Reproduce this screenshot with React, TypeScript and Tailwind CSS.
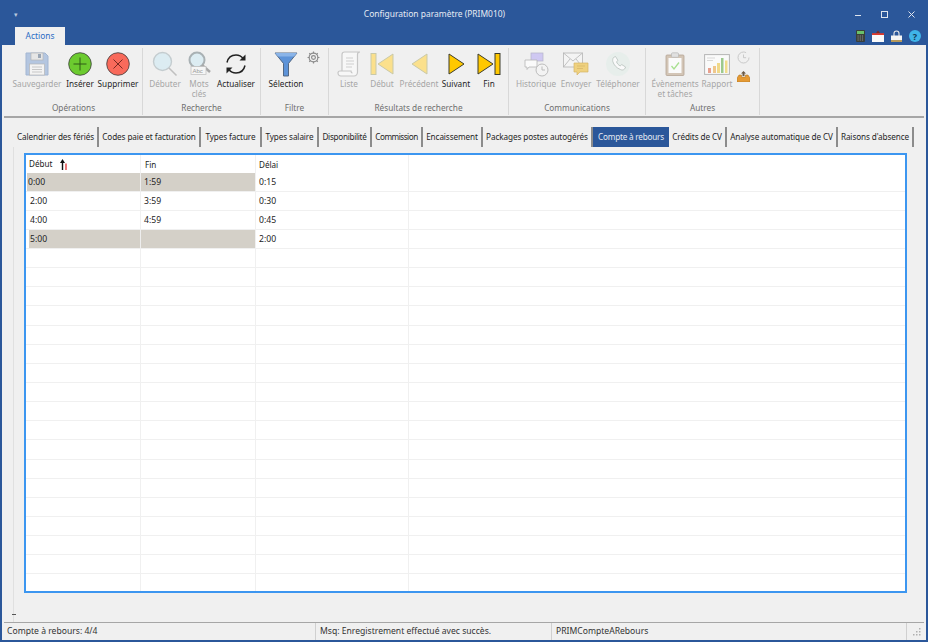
import React from 'react';

const FONT = 'font-["Noto_Sans","Open_Sans","Liberation_Sans",sans-serif]';

function Save() {
  return (
    <svg width="24" height="24" viewBox="0 0 24 24">
      <path d="M1 1h19l3 3v19H1z" fill="#b4c6e0" stroke="#a3b6d2" />
      <rect x="6" y="1" width="12" height="7" fill="#e6e6e6" stroke="#b5b5b5" strokeWidth="0.7" />
      <rect x="13" y="2" width="3" height="4" fill="#9aa6b5" />
      <rect x="4.5" y="12" width="15" height="11" fill="#f3f3f3" stroke="#b5b5b5" strokeWidth="0.7" />
      <path d="M7 15h10M7 17.5h10M7 20h10" stroke="#bbb" strokeWidth="0.8" />
    </svg>
  );
}

function Insert() {
  return (
    <svg width="24" height="24" viewBox="0 0 24 24">
      <circle cx="12" cy="12" r="11.3" fill="#6ccb2f" stroke="#3c3c3c" strokeWidth="0.8" />
      <path d="M12 5.5v13M5.5 12h13" stroke="#2f5a17" strokeWidth="1" />
    </svg>
  );
}

function Remove() {
  return (
    <svg width="24" height="24" viewBox="0 0 24 24">
      <circle cx="12" cy="12" r="11.3" fill="#f96a5b" stroke="#3c3c3c" strokeWidth="0.8" />
      <path d="M7.5 7.5l9 9M16.5 7.5l-9 9" stroke="#7a2a22" strokeWidth="1" />
    </svg>
  );
}

function Magnifier() {
  return (
    <svg width="26" height="26" viewBox="0 0 26 26">
      <circle cx="10.5" cy="10.5" r="9" fill="#dcecf2" stroke="#c4cccf" strokeWidth="1.4" />
      <path d="M17 17l7.5 7.5" stroke="#c0c0c0" strokeWidth="1.6" />
    </svg>
  );
}

function Keywords() {
  return (
    <svg width="24" height="26" viewBox="0 0 24 26">
      <circle cx="10" cy="9" r="7.5" fill="#dcecf2" stroke="#a9b1b4" strokeWidth="2" />
      <path d="M15 14l8 7" stroke="#a8a8a8" strokeWidth="2.4" />
      <rect x="4" y="15.5" width="15" height="8" fill="#f5f5f5" stroke="#bdbdbd" strokeWidth="0.7" />
      <text x="5.5" y="22" fontSize="6" fill="#9a9a9a" fontFamily="Liberation Sans">Abc</text>
    </svg>
  );
}

function Refresh() {
  return (
    <svg width="24" height="22" viewBox="0 0 24 22" fill="none">
      <path d="M3 9.5C4 5 7.5 2 12 2c3 0 5.500 1.300 7 3.500" stroke="#222" strokeWidth="1.500" />
      <path d="M21.500 1.500v6h-6z" fill="#222" />
      <path d="M21 12.500C20 17 16.500 20 12 20c-3 0-5.500-1.300-7-3.500" stroke="#222" strokeWidth="1.500" />
      <path d="M2.500 20.500v-6h6z" fill="#222" />
    </svg>
  );
}

function Funnel() {
  return (
    <svg width="24" height="25" viewBox="0 0 24 25">
      <path d="M1 1h22l-8.500 10.500V24h-5V11.500z" fill="#5d93d8" stroke="#4a5d78" strokeWidth="0.9" />
      <path d="M1 1h22l-3 3.500H4z" fill="#8ab4e8" />
    </svg>
  );
}

function Gear() {
  return (
    <svg width="13" height="13" viewBox="0 0 24 24" fill="none" stroke="#8b8b8b" strokeWidth="2.200">
      <circle cx="12" cy="12" r="3.500" />
      <circle cx="12" cy="12" r="8" />
      <path d="M12 1v3M12 20v3M1 12h3M20 12h3M4.200 4.200l2.200 2.200M17.600 17.600l2.200 2.200M19.800 4.200l-2.200 2.200M6.400 17.600l-2.200 2.200" />
    </svg>
  );
}

function Scroll() {
  return (
    <svg width="24" height="26" viewBox="0 0 24 26" fill="none" stroke="#c6c6c6" strokeWidth="1.200">
      <path d="M5 20V3.500C5 2 6 1 7.500 1H23c-1.500 0-2.500 1-2.500 2.500V21c0 2-1.500 4-3.500 4H4c-2 0-3-1.500-3-3 0-1 1-2 2-2h11c0 1 .5 2 1.500 2" fill="#f7f7f7" />
      <path d="M9 7h7M9 10h8M9 13h8M9 16h6" stroke="#d0d0d0" />
    </svg>
  );
}

// first / previous / next / last all share the same triangle, only the colours change
function Arrow({ dir, bar, faded }: { dir: 'left' | 'right'; bar?: boolean; faded?: boolean }) {
  const fill = faded ? '#fbe08c' : '#ffc800';
  const stroke = faded ? '#c9c9a8' : '#3c3c2c';
  const w = bar ? 24 : 17;
  const points = dir === 'right' ? '1,1 16,11 1,21' : bar ? '23,1 8,11 23,21' : '16,1 1,11 16,21';
  return (
    <svg width={w} height="22" viewBox={`0 0 ${w} 22`}>
      <polygon points={points} fill={fill} stroke={stroke} strokeWidth="1" />
      {bar && (
        <rect x={dir === 'right' ? 18 : 1} y="0.500" width="5" height="21" fill={fill} stroke={stroke} strokeWidth="1" />
      )}
    </svg>
  );
}

function History() {
  return (
    <svg width="25" height="25" viewBox="0 0 25 25">
      <rect x="7" y="1" width="12" height="8" fill="#cfc8f2" stroke="#b4b4c8" strokeWidth="0.7" />
      <path d="M1 8h12v7H5l-2 2.500V15H1z" fill="#fafafa" stroke="#b5b5b5" strokeWidth="0.8" />
      <circle cx="18" cy="18" r="6" fill="#f3f3f3" stroke="#b5b5b5" strokeWidth="0.9" />
      <path d="M18 14.500V18h3" stroke="#b5b5b5" fill="none" strokeWidth="0.9" />
    </svg>
  );
}

function Mail() {
  return (
    <svg width="26" height="24" viewBox="0 0 26 24">
      <rect x="0.500" y="1" width="19" height="14" fill="#f4f4f4" stroke="#b5b5b5" strokeWidth="0.8" />
      <path d="M0.500 1L10 9l9.500-8M0.500 15L7 7M19.500 15L13 7" stroke="#b5b5b5" strokeWidth="0.8" fill="none" />
      <path d="M11 11h14v9h-8l-3 3v-3h-3z" fill="#efd17f" stroke="#d6b568" strokeWidth="0.7" />
      <path d="M14 14h8M14 16.500h6" stroke="#d6b568" strokeWidth="0.7" />
    </svg>
  );
}

function Phone() {
  return (
    <svg width="24" height="24" viewBox="0 0 24 24">
      <circle cx="12" cy="12" r="12" fill="#e7eeeb" />
      <path d="M7.500 5.500l2-1 2.500 4-1.500 1.200c.5 1.800 2 3.500 3.800 4.300l1.300-1.500 4 2.500-1 2c-1 1-2.500 1.300-4 .6C10.500 16 7.800 13 6.800 9.500c-.3-1.500 0-3 .7-4z" fill="#fafafa" stroke="#b8c2bd" strokeWidth="0.8" />
    </svg>
  );
}

function Clipboard() {
  return (
    <svg width="20" height="24" viewBox="0 0 20 24">
      <rect x="1" y="3" width="18" height="20.500" rx="1" fill="#d3c5b6" stroke="#b5a596" strokeWidth="0.8" />
      <rect x="3.500" y="6" width="13" height="15" fill="#fafafa" />
      <rect x="6.500" y="0.800" width="7" height="4.500" rx="1" fill="#e0e0e0" stroke="#b8b8b8" strokeWidth="0.7" />
      <path d="M6.500 14l2.500 3 5-6.500" fill="none" stroke="#a8e090" strokeWidth="1.300" />
    </svg>
  );
}

function Report() {
  return (
    <svg width="26" height="21" viewBox="0 0 26 21">
      <rect x="0.600" y="0.600" width="24.800" height="19.800" fill="#fafafa" stroke="#b5b5b5" strokeWidth="1" />
      <path d="M3 4h8M3 6.500h6" stroke="#cfcfcf" strokeWidth="0.8" />
      <rect x="4" y="14" width="3" height="5" fill="#e8a08e" />
      <rect x="9" y="12" width="3" height="7" fill="#efc78b" />
      <rect x="13" y="9" width="3" height="10" fill="#f0d98a" />
      <rect x="17" y="4" width="2.500" height="15" fill="#9cc98c" />
      <rect x="21" y="6.500" width="2.500" height="12.500" fill="#f0dc8c" />
    </svg>
  );
}

function SmallClock() {
  return (
    <svg width="13" height="13" viewBox="0 0 13 13" fill="none" stroke="#c4c4c4" strokeWidth="0.9">
      <circle cx="6.500" cy="6.500" r="5.500" strokeDasharray="28 6" />
      <path d="M6.500 3.500v3.200h2.600" />
    </svg>
  );
}

function Tray() {
  return (
    <svg width="13" height="11" viewBox="0 0 13 11">
      <path d="M6.500 0l2.500 2.500H7.500V5h-2V2.500H4z" fill="#6c5a45" />
      <path d="M2 4h2.500v2h4V4H11l2 3v4H0V7z" fill="#e59a34" stroke="#a66c20" strokeWidth="0.5" />
    </svg>
  );
}

function Calculator() {
  return (
    <svg width="9" height="12" viewBox="0 0 9 12">
      <rect width="9" height="12" rx="1" fill="#3a3f3a" />
      <rect x="1" y="1" width="7" height="3" fill="#6ac06a" />
      <path d="M1.500 6h6M1.500 8h6M1.500 10h6" stroke="#8f8f8f" strokeDasharray="1.200 1" />
    </svg>
  );
}

function Calendar() {
  return (
    <svg width="12" height="12" viewBox="0 0 12 12">
      <rect y="4" width="12" height="8" fill="#fafafa" />
      <path d="M0 5V3.200h12V5z" fill="#e0392b" />
      <path d="M4 3l2-2.500L8 3" fill="#7f2a22" />
    </svg>
  );
}

function Lock() {
  return (
    <svg width="11" height="12" viewBox="0 0 11 12">
      <path d="M3 6V3.500a2.500 2.500 0 0 1 5 0V6" fill="none" stroke="#e8e8e8" strokeWidth="1.100" />
      <rect y="5.500" width="11" height="6.500" fill="#f4f4f4" />
      <rect y="10" width="11" height="2" fill="#b79a5c" />
    </svg>
  );
}

function Help() {
  return (
    <div className="flex h-[12px] w-[12px] items-center justify-center rounded-full bg-[#3fb4e8] text-[9px] font-bold leading-none text-[#123a58]">
      ?
    </div>
  );
}

function RibbonButton({ w, label, icon, disabled }: { w: string; label: string; icon: React.ReactNode; disabled?: boolean }) {
  return (
    <div className={`flex shrink-0 flex-col items-center ${w}`}>
      <div className="flex h-[28px] items-center justify-center">{icon}</div>
      <div className={`mt-[1px] whitespace-pre-line text-center text-[8.2px] leading-[10px] ${disabled ? 'text-[#a6a6a6]' : 'text-[#1f1f1f]'}`}>
        {label}
      </div>
    </div>
  );
}

function Group({ w, pl, label, children }: { w: string; pl: string; label: string; children: React.ReactNode }) {
  return (
    <div className={`flex h-[67px] shrink-0 flex-col border-r border-[#d8d8d8] ${w}`}>
      <div className={`flex h-[54px] pt-[2px] ${pl}`}>{children}</div>
      <div className="text-center text-[8.25px] leading-[12px] text-[#6e6e6e]">{label}</div>
    </div>
  );
}

const tabs = [
  { label: 'Calendrier des fériés', w: 'w-[85px]', track: 'tracking-[-0.1px]' },
  { label: 'Codes paie et facturation', w: 'w-[102px]', track: 'tracking-[-0.1px]' },
  { label: 'Types facture', w: 'w-[61px]', track: 'tracking-[-0.1px]' },
  { label: 'Types salaire', w: 'w-[57px]', track: 'tracking-[-0.1px]' },
  { label: 'Disponibilité', w: 'w-[53px]', track: 'tracking-[-0.3px]' },
  { label: 'Commission', w: 'w-[51px]', track: 'tracking-[-0.5px]' },
  { label: 'Encaissement', w: 'w-[60px]', track: 'tracking-[-0.1px]' },
  { label: 'Packages postes autogérés', w: 'w-[110px]', track: 'tracking-[-0.1px]' },
  { label: 'Compte à rebours', w: 'w-[76px]', track: 'tracking-[-0.2px]', active: true },
  { label: 'Crédits de CV', w: 'w-[58px]', track: 'tracking-[-0.1px]' },
  { label: 'Analyse automatique de CV', w: 'w-[111px]', track: 'tracking-[-0.1px]' },
  { label: "Raisons d'absence", w: 'w-[76px]', track: 'tracking-[-0.1px]' },
];

const rows = [
  { a: '0:00', b: '1:59', c: '0:15', hl: 'first' },
  { a: '2:00', b: '3:59', c: '0:30' },
  { a: '4:00', b: '4:59', c: '0:45' },
  { a: '5:00', b: '', c: '2:00', hl: 'last' },
];

export default function App() {
  const emptyRows = Array.from({ length: 18 });

  return (
    <div className={`flex h-[642px] w-[928px] flex-col overflow-hidden border-x-[2px] border-b-[2px] border-t border-[#2b579a] bg-[#f0f0f0] ${FONT}`}>
      {/* title bar */}
      <div className="h-[44px] shrink-0 bg-[#2b579a] text-[#e6ebf4]">
        <div className="flex h-[26px] items-center">
          <div className="ml-[10px] w-[8px] text-center text-[7px] leading-none text-[#b9c8de]">▾</div>
          <div className="flex-1 pr-[6px] pt-[1px] text-center text-[8.45px]">Configuration paramètre (PRIM010)</div>
          <div className="flex items-center gap-[20px] pr-[11px]">
            <div className="mt-[2px] h-[1px] w-[6px] bg-[#dfe5ee]" />
            <div className="h-[7px] w-[7px] border border-[#dfe5ee]" />
            <svg width="7" height="7" viewBox="0 0 7 7" stroke="#dfe5ee" strokeWidth="1">
              <path d="M0.500 0.500l6 6M6.500 0.500l-6 6" />
            </svg>
          </div>
        </div>
        <div className="flex h-[18px] items-end justify-between">
          <div className="ml-[13px] flex h-[18px] w-[50px] items-center justify-center bg-[#f0f0f0] pt-[1px] text-[8.4px] text-[#2b6cc4]">Actions</div>
          <div className="flex items-center gap-[7px] pb-[3px] pr-[5px]">
            <Calculator />
            <Calendar />
            <Lock />
            <Help />
          </div>
        </div>
      </div>

      {/* ribbon */}
      <div className="flex h-[71px] shrink-0 pl-[3px] pt-[3px]">
        <Group w="w-[138px]" pl="pl-[7px]" label="Opérations">
          <RibbonButton w="w-[50px]" label="Sauvegarder" disabled icon={<Save />} />
          <RibbonButton w="w-[36px]" label="Insérer" icon={<Insert />} />
          <RibbonButton w="w-[40px]" label="Supprimer" icon={<Remove />} />
        </Group>
        <Group w="w-[118px]" pl="pl-[6px]" label="Recherche">
          <RibbonButton w="w-[32px]" label="Débuter" disabled icon={<Magnifier />} />
          <RibbonButton w="w-[36px]" label={'Mots\nclés'} disabled icon={<Keywords />} />
          <RibbonButton w="w-[38px]" label="Actualiser" icon={<Refresh />} />
        </Group>
        <Group w="w-[68px]" pl="pl-[5px]" label="Filtre">
          <RibbonButton w="w-[40px]" label="Sélection" icon={<Funnel />} />
          <div className="ml-[1px] mt-[1px]">
            <Gear />
          </div>
        </Group>
        <Group w="w-[180px]" pl="pl-[5px]" label="Résultats de recherche">
          <RibbonButton w="w-[30px]" label="Liste" disabled icon={<Scroll />} />
          <RibbonButton w="w-[36px]" label="Début" disabled icon={<Arrow dir="left" bar faded />} />
          <RibbonButton w="w-[38px]" label="Précédent" disabled icon={<Arrow dir="left" faded />} />
          <RibbonButton w="w-[36px]" label="Suivant" icon={<Arrow dir="right" />} />
          <RibbonButton w="w-[30px]" label="Fin" icon={<Arrow dir="right" bar />} />
        </Group>
        <Group w="w-[137px]" pl="pl-[5px]" label="Communications">
          <RibbonButton w="w-[44px]" label="Historique" disabled icon={<History />} />
          <RibbonButton w="w-[36px]" label="Envoyer" disabled icon={<Mail />} />
          <RibbonButton w="w-[48px]" label="Téléphoner" disabled icon={<Phone />} />
        </Group>
        <Group w="w-[114px]" pl="pl-[6px]" label="Autres">
          <RibbonButton w="w-[46px]" label={'Évènements\net tâches'} disabled icon={<Clipboard />} />
          <RibbonButton w="w-[38px]" label="Rapport" disabled icon={<Report />} />
          <div className="ml-[1px] flex flex-col items-center gap-[7px] pt-[1px]">
            <SmallClock />
            <Tray />
          </div>
        </Group>
      </div>

      {/* main area */}
      <div className="mx-[2px] flex min-h-0 flex-1 flex-col border-t-[2px] border-[#a6a6a6]">
        <div className="mt-[9px] flex h-[20px] shrink-0 pl-[10px]">
          {tabs.map((t) => (
            <div
              key={t.label}
              className={`flex shrink-0 items-center justify-center whitespace-nowrap text-[8.17px] ${t.track} ${t.w} ${
                t.active ? 'bg-[#2b579a] text-[#e6ebf4]' : 'border-r-[2px] border-[#8c8c8c] text-[#1f1f1f]'
              }`}
            >
              {t.label}
            </div>
          ))}
        </div>

        <div className="ml-[9px] mr-[11px] flex min-h-0 flex-1 flex-col border-l border-[#e0e0e0] pl-[10px] pt-[6px]">
          <div className="h-[440px] w-[883px] shrink-0 overflow-hidden border-[2px] border-[#3c96f0] bg-white text-[8.6px] text-[#222]">
            <div className="grid h-[17.5px] grid-cols-[114px_115px_153px_1fr] items-center text-[8.1px]">
              <div className="flex items-center pl-[3px] pt-[1px]">
                Début
                <svg className="ml-[8px]" width="8" height="11" viewBox="0 0 8 11">
                  <path d="M2.500 11V3" stroke="#111" strokeWidth="1.400" />
                  <path d="M0 4l2.500-4L5 4z" fill="#111" />
                  <path d="M6 4.500V11" stroke="#e02020" strokeWidth="1.200" />
                </svg>
              </div>
              <div className="h-full border-l border-[#f0f0f0] pl-[4px] pt-[1px] leading-[17px]">Fin</div>
              <div className="h-full border-l border-[#f0f0f0] pl-[3px] pt-[1px] leading-[17px]">Délai</div>
              <div className="h-full border-l border-[#f0f0f0]" />
            </div>
            {rows.map((r) => (
              <div key={r.a} className="grid h-[19.15px] grid-cols-[114px_115px_153px_1fr] items-center border-b border-[#f0f0f0]">
                <div className={`flex h-full items-center pt-[1px] ${r.hl === 'first' ? 'ml-[1px] bg-[#d4d0c8] pl-[1px]' : r.hl === 'last' ? 'ml-[3px] bg-[#d4d0c8] pl-[1px]' : 'pl-[4px]'}`}>{r.a}</div>
                <div className={`flex h-full items-center border-l pl-[3px] pt-[1px] ${r.hl ? 'border-[#eeeeee] bg-[#d4d0c8]' : 'border-[#f0f0f0]'}`}>{r.b}</div>
                <div className="flex h-full items-center border-l border-[#f0f0f0] pl-[3px] pt-[1px]">{r.c}</div>
                <div className="h-full border-l border-[#f0f0f0]" />
              </div>
            ))}
            {emptyRows.map((_, i) => (
              <div key={i} className="grid h-[19.15px] grid-cols-[114px_115px_153px_1fr] border-b border-[#f0f0f0]">
                <div />
                <div className="border-l border-[#f0f0f0]" />
                <div className="border-l border-[#f0f0f0]" />
                <div className="border-l border-[#f0f0f0]" />
              </div>
            ))}
            <div className="grid h-[19px] grid-cols-[114px_115px_153px_1fr]">
              <div />
              <div className="border-l border-[#f0f0f0]" />
              <div className="border-l border-[#f0f0f0]" />
              <div className="border-l border-[#f0f0f0]" />
            </div>
          </div>
          <div className="mt-[21px] h-[1px] w-[4px] -translate-x-[12px] bg-[#555]" />
        </div>
      </div>

      {/* status bar */}
      <div className="mx-[2px] flex h-[18px] shrink-0 items-center border-t border-[#a6a6a6] text-[8.6px] text-[#333]">
        <div className="h-full w-[312px] border-r border-[#d0d0d0] pl-[3px] leading-[17px]">Compte à rebours: 4/4</div>
        <div className="h-full w-[236px] whitespace-nowrap border-r border-[#d0d0d0] pl-[4px] leading-[17px]">Msq: Enregistrement effectué avec succès.</div>
        <div className="h-full w-[355px] border-r border-[#d0d0d0] pl-[4px] leading-[17px]">PRIMCompteARebours</div>
        <div className="flex flex-1 items-end justify-end pr-[3px]">
          <svg width="8" height="8" viewBox="0 0 8 8" fill="#b0b0b0">
            <rect x="6" y="0" width="1.500" height="1.500" />
            <rect x="3" y="3" width="1.500" height="1.500" />
            <rect x="6" y="3" width="1.500" height="1.500" />
            <rect x="0" y="6" width="1.500" height="1.500" />
            <rect x="3" y="6" width="1.500" height="1.500" />
            <rect x="6" y="6" width="1.500" height="1.500" />
          </svg>
        </div>
      </div>
    </div>
  );
}
